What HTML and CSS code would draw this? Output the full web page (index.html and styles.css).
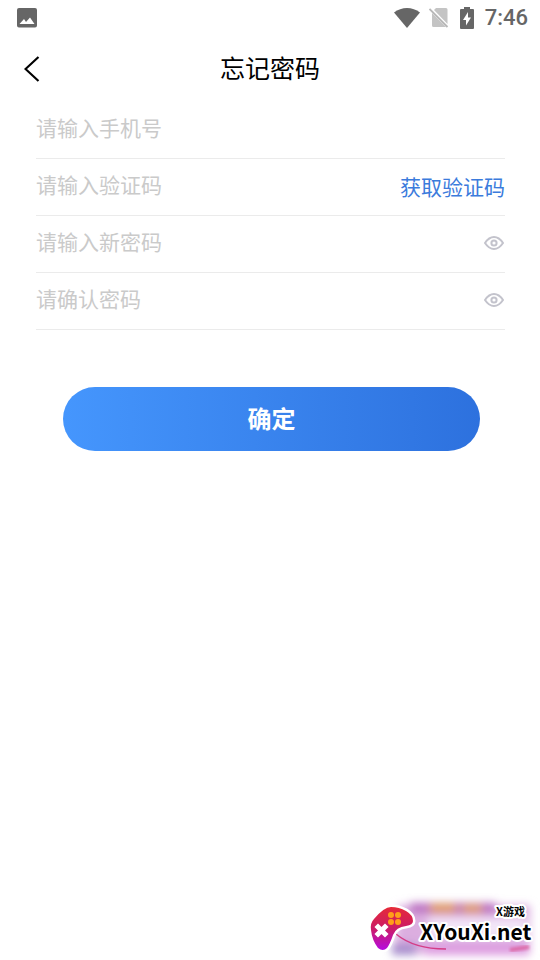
FILE: index.html
```html
<!DOCTYPE html>
<html lang="zh-CN">
<head>
<meta charset="utf-8">
<meta name="viewport" content="width=device-width, initial-scale=1">
<title>忘记密码</title>
<link rel="stylesheet" href="styles.css">
</head>
<body>
<div class="status">
  <svg class="status-photo" width="20" height="20" viewBox="0 0 20 20" aria-hidden="true"><path fill="#666" fill-rule="evenodd" d="M2 0h16a2 2 0 0 1 2 2v15.500a2 2 0 0 1-2 2H2a2 2 0 0 1-2-2V2a2 2 0 0 1 2-2zM2.500 16h15l-4.500-6.500-4 4.500-2-3z"/></svg>
  <div class="status-right">
    <svg width="26" height="22" viewBox="0 0 26 22" aria-hidden="true"><path fill="#666" d="M0 5.500C7.500-.500 18.500-.500 26 5.500L13 21z"/></svg>
    <svg width="20" height="22" viewBox="0 0 20 22" aria-hidden="true"><path fill="#c4c4c4" d="M7 1h10a1.500 1.500 0 0 1 1.500 1.500v14.500L5 3zM3 6l14 14H4.500A1.500 1.500 0 0 1 3 18.500z"/><path d="M.500 2l18 18" stroke="#b8b8b8" stroke-width="1.800"/></svg>
    <svg width="14" height="22" viewBox="0 0 14 22" aria-hidden="true"><path fill="#666" d="M4 0h6v2h3a1 1 0 0 1 1 1v18a1 1 0 0 1-1 1H1a1 1 0 0 1-1-1V3a1 1 0 0 1 1-1h3z"/><path fill="#fff" d="M8 5v5.500h3L6 18.500V13H3z"/></svg>
    <span class="time">7:46</span>
  </div>
</div>
<header class="header">
  <button class="back" type="button" aria-label="返回"><svg width="16" height="26" viewBox="0 0 16 26" aria-hidden="true"><path d="M14.500 1L1.500 13l13 12" fill="none" stroke="#000" stroke-width="2.200"/></svg></button>
  <h1 class="title">忘记密码</h1>
</header>
<main>
  <form class="form">
    <div class="row"><input class="field" type="tel" aria-label="手机号" placeholder="请输入手机号"></div>
    <div class="row"><input class="field" type="text" aria-label="验证码" placeholder="请输入验证码"><button class="code" type="button">获取验证码</button></div>
    <div class="row"><input class="field" type="password" aria-label="新密码" placeholder="请输入新密码"><button class="eye" type="button" aria-label="显示新密码"><svg width="20" height="14" viewBox="0 0 20 14" aria-hidden="true"><g fill="none" stroke="#c3c3cc" stroke-width="2"><path d="M1 7Q5 1 10 1t9 6q-4 6-9 6T1 7z"/><circle cx="10" cy="7" r="2.600"/></g></svg></button></div>
    <div class="row"><input class="field" type="password" aria-label="确认密码" placeholder="请确认密码"><button class="eye" type="button" aria-label="显示确认密码"><svg width="20" height="14" viewBox="0 0 20 14" aria-hidden="true"><g fill="none" stroke="#c3c3cc" stroke-width="2"><path d="M1 7Q5 1 10 1t9 6q-4 6-9 6T1 7z"/><circle cx="10" cy="7" r="2.600"/></g></svg></button></div>
    <button class="submit" type="submit">确定</button>
  </form>
</main>
<div class="brand">
  <svg width="180" height="70" viewBox="0 0 180 70" role="img" aria-label="XYouXi.net X游戏">
    <defs>
      <linearGradient id="pad" x1="0" y1="0" x2="0" y2="1"><stop offset="0" stop-color="#e62a38"/><stop offset=".5" stop-color="#cb1c66"/><stop offset="1" stop-color="#b50be0"/></linearGradient>
      <filter id="soft" x="-20%" y="-50%" width="140%" height="200%"><feGaussianBlur stdDeviation="4"/></filter>
      <filter id="haze" x="-10%" y="-50%" width="120%" height="200%"><feGaussianBlur stdDeviation="1.500"/></filter>
    </defs>
    <g filter="url(#soft)">
      <path fill="#dcaee0" d="M38 15h132v49H34z"/>
      <path fill="#b96cc0" d="M50 13h86v10H50z"/>
      <path fill="#e09a50" d="M70 14h26v9H70zM102 15h20v8h-20z"/>
      <path fill="#a68ccc" d="M32 54h24v11H32z"/>
      <path fill="#dd9be0" d="M65 54h104v11H65z"/>
      <path fill="#f3e6f8" d="M68 28h98v20H68z"/>
    </g>
    <path d="M150 60L169 57" fill="none" stroke="#dc6aa8" stroke-width="4" filter="url(#haze)"/>
    <path d="M36 44Q54 59 86 59" fill="none" stroke="#d43d87" stroke-width="1.500"/>
    <path fill="url(#pad)" stroke="#fff" stroke-width="5" stroke-linejoin="round" paint-order="stroke" d="M31 17Q39 17 46 21Q53 25 53 31Q53 35 46 36Q36 37 33 45Q30 54 27 58Q23 62 18 58Q12 50 11 40Q10 33 14 29Q24 17 31 17z"/>
    <path d="M18 37l7 7m0-7l-7 7" stroke="#fff" stroke-width="5" stroke-linecap="square"/>
    <g fill="#ff9f1a"><circle cx="31" cy="25" r="3"/><circle cx="38" cy="25" r="3"/><circle cx="31" cy="32" r="3"/><circle cx="38" cy="32" r="3"/></g>
    <text class="brand-name" x="60" y="50">XYouXi.net</text>
    <text class="brand-sub" x="136" y="26">X游戏</text>
  </svg>
</div>
</body>
</html>
```
FILE: styles.css
```css
* {
  box-sizing: border-box;
}

body {
  margin: 0;
  min-height: 100vh;
  display: flex;
  flex-direction: column;
  background: #fff;
  color: #000;
  font-family: "Noto Sans CJK SC", sans-serif;
}

button {
  border: 0;
  padding: 0;
  background: none;
  font: inherit;
  cursor: pointer;
}

svg {
  display: block;
}

.status {
  display: flex;
  align-items: center;
  justify-content: space-between;
  height: 35px;
  padding: 0 12px 0 17px;
}

.status-right {
  display: flex;
  align-items: center;
  gap: 11px;
}

.status-right svg:first-child {
  margin-right: -2px;
}

.time {
  color: #666;
  font: 500 22px/22px Roboto, sans-serif;
}

.header {
  display: grid;
  grid-template-columns: 40px 1fr 40px;
  align-items: center;
  height: 67px;
  padding: 0 24px;
}

.title {
  margin: 0;
  padding-bottom: 4px;
  font-size: 25px;
  font-weight: 400;
  line-height: 36px;
  text-align: center;
}

.form {
  display: flex;
  flex-direction: column;
  padding: 0 35px 0 36px;
}

.row {
  display: flex;
  align-items: center;
  height: 57px;
  padding-bottom: 2px;
  border-bottom: 1px solid #ebebeb;
}

.field {
  flex: 1;
  min-width: 0;
  height: 100%;
  border: 0;
  padding: 0 0 4px;
  background: none;
  outline: 0;
  color: #333;
  font: 400 21px/30px "Noto Sans CJK SC", sans-serif;
}

.field::placeholder {
  color: #cacaca;
  opacity: 1;
}

.code {
  color: #3b7bdc;
  font-size: 21px;
  line-height: 30px;
}

.eye {
  padding: 8px 1px 8px 8px;
}

.submit {
  height: 64px;
  margin: 57px 25px 0 27px;
  padding-bottom: 4px;
  border-radius: 32px;
  background: linear-gradient(90deg, #4596fd, #2d71de);
  color: #fff;
  font-size: 24px;
  font-weight: 700;
}

.brand {
  display: flex;
  justify-content: flex-end;
  margin-top: auto;
}

.brand text {
  fill: #000;
  stroke: #fff;
  stroke-width: 4px;
  stroke-linejoin: round;
  paint-order: stroke;
  font-family: "Noto Sans CJK SC", sans-serif;
  font-weight: 700;
}

.brand .brand-name {
  font-size: 21px;
}

.brand .brand-sub {
  font-size: 11px;
}
```
